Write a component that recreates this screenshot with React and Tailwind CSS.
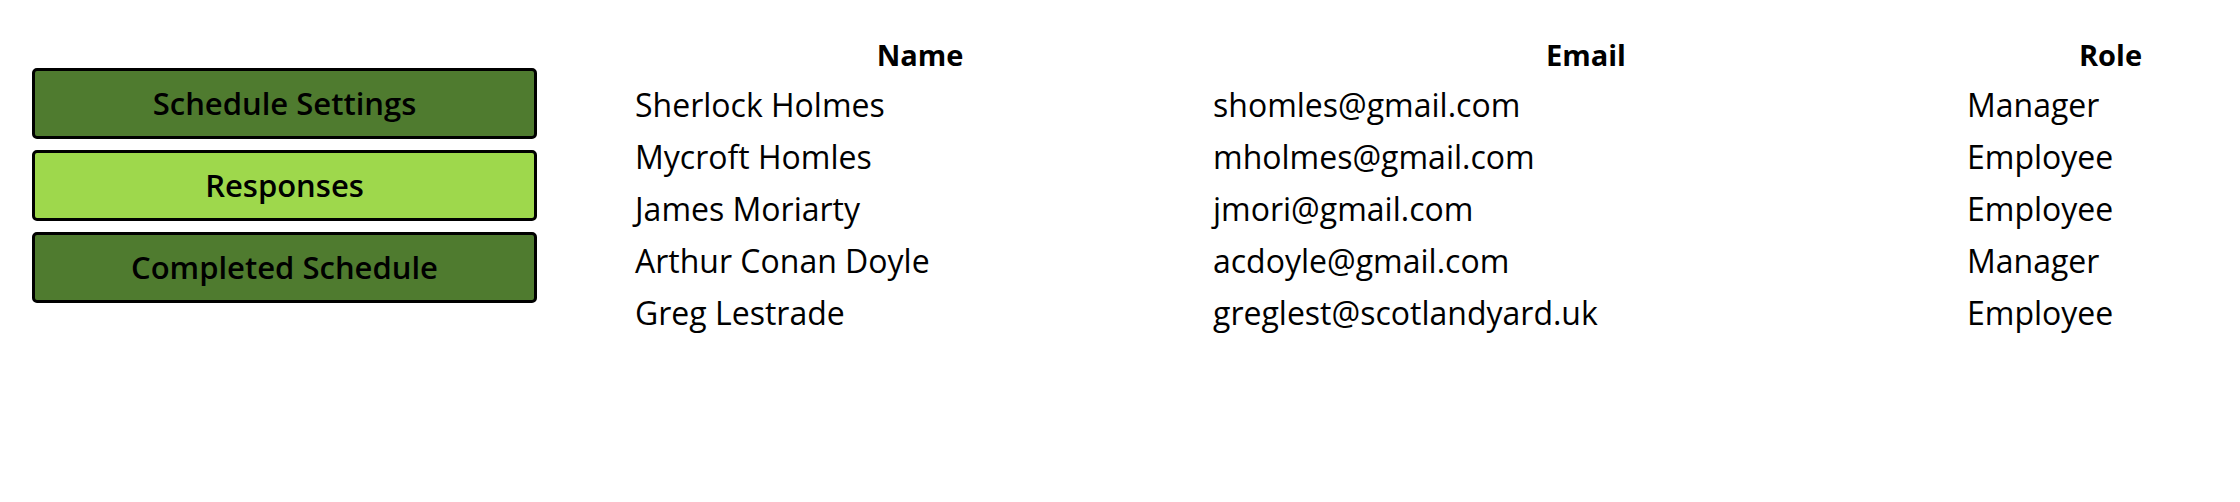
import React, { useState } from "react";

const users = [
  { name: "Sherlock Holmes", email: "shomles@gmail.com", role: "Manager" },
  { name: "Mycroft Homles", email: "mholmes@gmail.com", role: "Employee" },
  { name: "James Moriarty", email: "jmori@gmail.com", role: "Employee" },
  { name: "Arthur Conan Doyle", email: "acdoyle@gmail.com", role: "Manager" },
  { name: "Greg Lestrade", email: "greglest@scotlandyard.uk", role: "Employee" },
];

const tabs = ["Schedule Settings", "Responses", "Completed Schedule"];

function App() {
  const [active, setActive] = useState("Responses");

  return (
    <div className="flex w-full overflow-hidden bg-white pl-[32px] text-black font-['Open_Sans',sans-serif]">
      <div className="mt-[68px] flex w-[505px] shrink-0 flex-col gap-[11px]">
        {tabs.map((tab) => (
          <button
            key={tab}
            onClick={() => setActive(tab)}
            className={
              active === tab
                ? "h-[71px] rounded-[5px] border-[3px] border-black bg-[#9ed84c] text-[31px] font-semibold"
                : "h-[71px] rounded-[5px] border-[3px] border-black bg-[#4f7b2f] text-[31px] font-semibold"
            }
          >
            {tab}
          </button>
        ))}
      </div>

      <table className="ml-[94px] mt-[31px] shrink-0 border-collapse">
        <thead>
          <tr>
            <th className="w-[578px] px-[4px] py-[4px] text-center text-[29px] font-bold leading-[40px]">Name</th>
            <th className="w-[754px] px-[4px] py-[4px] text-center text-[29px] font-bold leading-[40px]">Email</th>
            <th className="w-[277px] py-[4px] pl-[22px] pr-[4px] text-center text-[29px] font-bold leading-[40px]">Role</th>
          </tr>
        </thead>
        <tbody>
          {users.map((u) => (
            <tr key={u.email}>
              <td className="px-[4px] py-[4px] text-left text-[32px] leading-[44px]">{u.name}</td>
              <td className="px-[4px] py-[4px] text-left text-[32px] leading-[44px]">{u.email}</td>
              <td className="px-[4px] py-[4px] text-left text-[32px] leading-[44px]">{u.role}</td>
            </tr>
          ))}
        </tbody>
      </table>
    </div>
  );
}

export default App;
